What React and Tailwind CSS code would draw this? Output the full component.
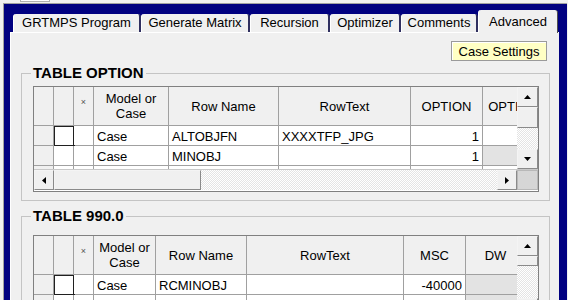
import React from "react"

const tabs = [
  { label: "GRTMPS Program", w: "w-[128px]" },
  { label: "Generate Matrix", w: "w-[109px]" },
  { label: "Recursion", w: "w-[80px]" },
  { label: "Optimizer", w: "w-[71px]" },
  { label: "Comments", w: "w-[77px]" },
]

const optionCols = [
  { kind: "hdr", w: "w-[20px]" },
  { kind: "chk", w: "w-[20px]" },
  { kind: "x", w: "w-[20px]" },
  { key: "model", label: "Model or\nCase", w: "w-[75px]" },
  { key: "name", label: "Row Name", w: "w-[110px]" },
  { key: "text", label: "RowText", w: "w-[132px]" },
  { key: "v1", label: "OPTION", w: "w-[72px]", num: true },
  { key: "v2", label: "OPTION 2", w: "w-[72px]", num: true },
]

const optionRows = [
  { focus: true, model: "Case", name: "ALTOBJFN", text: "XXXXTFP_JPG", v1: "1", v2: "" },
  { model: "Case", name: "MINOBJ", text: "", v1: "1", gray: ["v2"] },
  { model: "", name: "", text: "" },
]

const t990Cols = [
  { kind: "hdr", w: "w-[20px]" },
  { kind: "chk", w: "w-[20px]" },
  { kind: "x", w: "w-[20px]" },
  { key: "model", label: "Model or\nCase", w: "w-[62px]" },
  { key: "name", label: "Row Name", w: "w-[91px]" },
  { key: "text", label: "RowText", w: "w-[157px]" },
  { key: "msc", label: "MSC", w: "w-[62px]", num: true },
  { key: "dw", label: "DW", w: "w-[60px]", num: true },
]

const t990Rows = [
  { focus: true, model: "Case", name: "RCMINOBJ", text: "", msc: "-40000", gray: ["dw"] },
  { model: "Case", name: "ALTOBJFN", text: "", msc: "", gray: ["dw"] },
  { model: "Case", name: "MINOBJ", text: "", msc: "", gray: ["dw"] },
]

function Tri({ dir }) {
  if (dir === "up")
    return (
      <svg width="7" height="4" viewBox="0 0 7 4"><polygon points="0,4 7,4 3.5,0" fill="#000" /></svg>
    )
  if (dir === "down")
    return (
      <svg width="7" height="4" viewBox="0 0 7 4"><polygon points="0,0 7,0 3.5,4" fill="#000" /></svg>
    )
  if (dir === "left")
    return (
      <svg width="4" height="7" viewBox="0 0 4 7"><polygon points="4,0 4,7 0,3.5" fill="#000" /></svg>
    )
  return (
    <svg width="4" height="7" viewBox="0 0 4 7"><polygon points="0,0 0,7 4,3.5" fill="#000" /></svg>
  )
}

const btn =
  "shrink-0 flex items-center justify-center bg-[#f0f0f0] border border-t-[#f4f4f4] border-l-[#f4f4f4] border-r-[#8a8a8a] border-b-[#8a8a8a]"
const track =
  "bg-[#f4f4f4] bg-[image:repeating-conic-gradient(#ffffff_0_25%,#e4e4e4_0_50%)] bg-[length:2px_2px]"

function VScroll({ thumb }) {
  return (
    <div className="w-[21px] shrink-0 flex flex-col">
      <div className={`${btn} h-[20px]`}><Tri dir="up" /></div>
      <div className={`${btn} ${thumb}`} />
      <div className={`flex-1 ${track}`} />
      <div className={`${btn} h-[20px]`}><Tri dir="down" /></div>
    </div>
  )
}

function HScroll() {
  return (
    <div className="h-[21px] shrink-0 flex border-t border-[#c8c8c8]">
      <div className={`${btn} w-[20px]`}><Tri dir="left" /></div>
      <div className={`${btn} w-[147px]`} />
      <div className={`flex-1 ${track}`} />
      <div className={`${btn} w-[20px]`}><Tri dir="right" /></div>
      <div className="w-[21px] shrink-0 bg-[#d6d6d6] border border-[#b8b8b8]" />
    </div>
  )
}

function Grid({ cols, rows, thumb }) {
  return (
    <div className="w-full h-[106px] shrink-0 border border-[#808080] bg-white flex flex-col">
      <div className="h-[82px] shrink-0 flex">
        <div className="flex-1 min-w-0 overflow-hidden">
          <div className="h-[39px] flex border-b border-[#a0a0a0] bg-[#f0f0f0]">
            {cols.map((c, i) => (
              <div
                key={i}
                className={`${c.w} shrink-0 border-r border-[#a0a0a0] flex items-center justify-center text-center leading-[15px] whitespace-pre`}
              >
                {c.kind === "x" ? (
                  <span className="text-[9px] leading-none text-[#555] -mt-[7px]">×</span>
                ) : (
                  c.label
                )}
              </div>
            ))}
          </div>
          {rows.map((r, ri) => (
            <div key={ri} className="h-[20px] flex border-b border-[#a0a0a0]">
              {cols.map((c, i) => {
                if (c.kind === "hdr")
                  return <div key={i} className={`${c.w} shrink-0 border-r border-[#a0a0a0] bg-[#f0f0f0]`} />
                if (c.kind === "chk")
                  return (
                    <div key={i} className={`${c.w} shrink-0 border-r border-[#a0a0a0] bg-white`}>
                      {r.focus && (
                        <div className="w-[21px] h-[21px] border border-[#202020] border-r-2 border-b-2 bg-white" />
                      )}
                    </div>
                  )
                if (c.kind === "x")
                  return <div key={i} className={`${c.w} shrink-0 border-r border-[#a0a0a0] bg-white`} />
                const gray = r.gray && r.gray.includes(c.key)
                return (
                  <div
                    key={i}
                    className={`${c.w} shrink-0 border-r border-[#a0a0a0] overflow-hidden whitespace-nowrap leading-[19px] pt-[1px] ${
                      c.num ? "text-right pr-[3px]" : "pl-[3px]"
                    } ${gray ? "bg-[#e3e3e3]" : "bg-white"}`}
                  >
                    {r[c.key]}
                  </div>
                )
              })}
            </div>
          ))}
        </div>
        <VScroll thumb={thumb} />
      </div>
      <HScroll />
    </div>
  )
}

export default function App() {
  return (
    <div className="w-[568px] h-[300px] overflow-hidden bg-[#f0f0f0] flex flex-col pl-[3px] pr-[1px] font-['Liberation_Sans',Arial,sans-serif] text-[13px] text-black">
      <div className="h-[3px] shrink-0 flex">
        <div className="ml-[17px] w-[30px] h-[2px] border border-t-0 border-[#b0b0b0] bg-white" />
      </div>

      <div className="flex-1 min-h-0 flex flex-col border-t border-l border-[#a0a0a0] bg-[#000080] pl-[6px] pr-[8px] pt-[6px]">
        {/* tab strip */}
        <div className="h-[22px] shrink-0 flex items-end pl-[3px]">
          {tabs.map((t) => (
            <div
              key={t.label}
              className={`${t.w} h-[18px] shrink-0 rounded-t-[3px] bg-[#f0f0f0] border-l border-l-white border-r-2 border-r-[#303060] text-center leading-[18px] whitespace-nowrap`}
            >
              {t.label}
            </div>
          ))}
          <div className="w-[80px] h-[23px] -mb-[1px] relative shrink-0 rounded-t-[3px] bg-[#f0f0f0] border-l border-l-white border-r border-r-[#505050] text-center leading-[18px] pt-[3px]">
            Advanced
          </div>
        </div>

        {/* panel */}
        <div className="flex-1 min-h-0 overflow-hidden bg-[#f0f0f0] border-t border-l border-white pl-[10px] pt-[8px]">
          <div className="flex justify-end pr-[12px]">
            <div className="w-[96px] h-[20px] bg-[#ffffc4] border border-[#9a9a9a] shadow-[inset_1px_1px_0_#ffffff] flex items-center justify-center leading-none">
              Case Settings
            </div>
          </div>

          <fieldset className="w-[529px] min-w-0 mt-[4px] border border-[#c4c4c4] pl-[11px] pr-[10px] pb-[8px]">
            <legend className="-ml-[2px] px-[2px] text-[15px] leading-[16px] font-bold">TABLE OPTION</legend>
            <div className="mt-[5px]">
              <Grid cols={optionCols} rows={optionRows} thumb="h-[21px]" />
            </div>
          </fieldset>

          <fieldset className="w-[529px] min-w-0 mt-[7px] border border-[#c4c4c4] pl-[11px] pr-[10px] pb-[8px]">
            <legend className="-ml-[2px] px-[2px] text-[15px] leading-[16px] font-bold">TABLE 990.0</legend>
            <div className="mt-[11px]">
              <Grid cols={t990Cols} rows={t990Rows} thumb="h-[10px]" />
            </div>
          </fieldset>
        </div>
      </div>
    </div>
  )
}
